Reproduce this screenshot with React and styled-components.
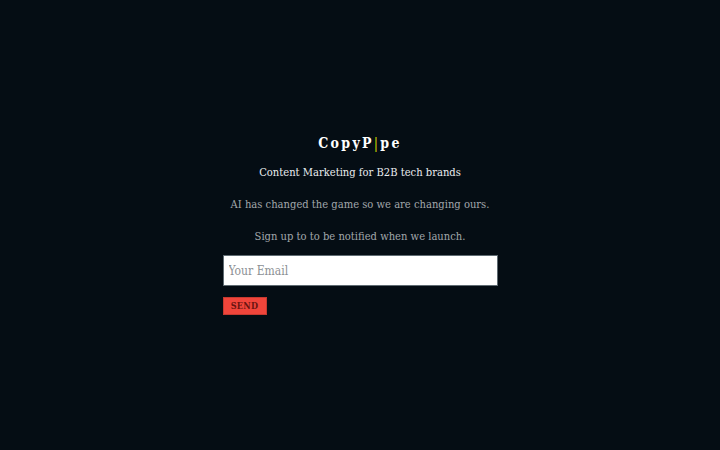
import React from "react";
import styled, { createGlobalStyle } from "styled-components";

const GlobalStyle = createGlobalStyle`
  html, body {
    margin: 0;
    padding: 0;
    background: #050d14;
  }
`;

const Page = styled.div`
  min-height: 450px;
  background: #050d14;
  display: flex;
  flex-direction: column;
  align-items: center;
  justify-content: center;
  font-family: "DejaVu Serif Condensed", "DejaVu Serif", serif;
  font-stretch: condensed;
  padding-bottom: 2px;
  box-sizing: border-box;
`;

const Content = styled.div`
  width: 275px;
  display: flex;
  flex-direction: column;
  align-items: center;
`;

const Logo = styled.h1`
  margin: 0;
  color: #fff;
  font-size: 14px;
  font-weight: bold;
  letter-spacing: 2.3px;
  line-height: 20px;
`;

const Pipe = styled.span`
  color: #cdd400;
  font-weight: normal;
`;

const Tagline = styled.p`
  margin: 11px 0 0;
  color: #e9ecef;
  font-size: 11.1px;
  line-height: 18px;
  white-space: nowrap;
`;

const Text = styled.p`
  margin: ${(p) => p.$gap}px 0 0;
  color: #a2a7ab;
  font-size: 11.1px;
  line-height: 18px;
  white-space: nowrap;
`;

const Form = styled.form`
  width: 100%;
  margin-top: 9px;
  display: flex;
  flex-direction: column;
  align-items: flex-start;
  gap: 11px;
`;

const EmailInput = styled.input`
  width: 100%;
  height: 31px;
  box-sizing: border-box;
  border: 1px solid #5f6b72;
  background: #fff;
  padding: 0 5px;
  font-family: inherit;
  font-stretch: condensed;
  font-size: 12px;
  color: #333;
  outline: none;
  &::placeholder {
    color: #8c9094;
  }
`;

const SendButton = styled.button`
  width: 44px;
  height: 18px;
  padding: 0;
  border: 1px solid #c73a30;
  background: #f1453b;
  color: #6a1410;
  font-family: inherit;
  font-stretch: condensed;
  font-size: 9px;
  font-weight: bold;
  letter-spacing: 0.3px;
  cursor: pointer;
`;

export default function App() {
  return (
    <>
      <GlobalStyle />
      <Page>
        <Content>
          <Logo>
            CopyP<Pipe>|</Pipe>pe
          </Logo>
          <Tagline>Content Marketing for B2B tech brands</Tagline>
          <Text $gap={14}>AI has changed the game so we are changing ours.</Text>
          <Text $gap={14}>Sign up to to be notified when we launch.</Text>
          <Form onSubmit={(e) => e.preventDefault()}>
            <EmailInput type="email" placeholder="Your Email" />
            <SendButton type="submit">SEND</SendButton>
          </Form>
        </Content>
      </Page>
    </>
  );
}
